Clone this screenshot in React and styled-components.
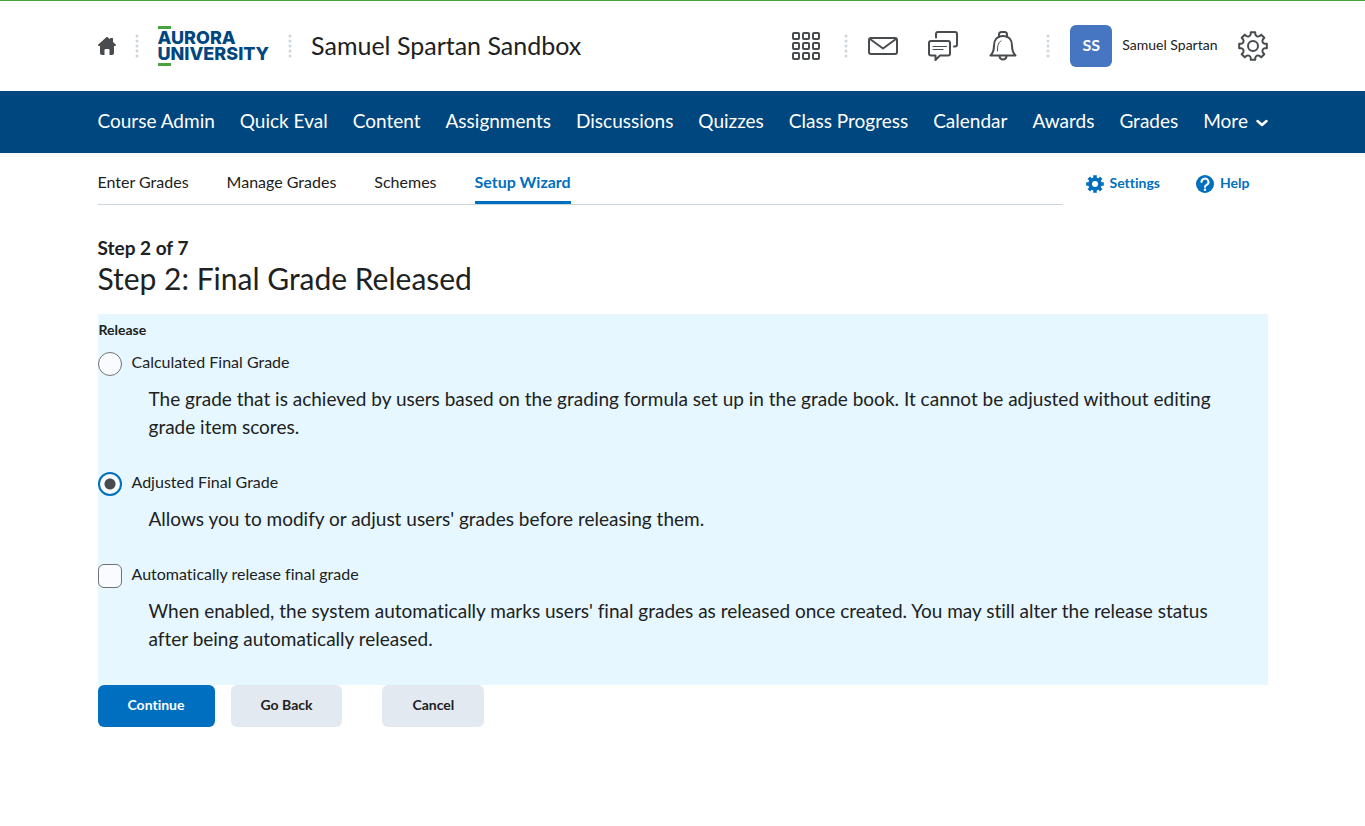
import { useState } from 'react';
import styled, { createGlobalStyle } from 'styled-components';

const navItems = [
    'Course Admin', 'Quick Eval', 'Content', 'Assignments', 'Discussions',
    'Quizzes', 'Class Progress', 'Calendar', 'Awards', 'Grades',
];

const tabs = ['Enter Grades', 'Manage Grades', 'Schemes', 'Setup Wizard'];

// solid gear with flat teeth, centred on (c, c)
function gearPath(c, outer, inner, tip, root) {
    const points = [];
    for (let i = 0; i < 8; i++) {
        const mid = i * 45;
        [[-root, inner], [-tip, outer], [tip, outer], [root, inner]].forEach(([offset, r]) => {
            const a = ((mid + offset) * Math.PI) / 180;
            points.push(`${(c + r * Math.sin(a)).toFixed(2)} ${(c - r * Math.cos(a)).toFixed(2)}`);
        });
    }
    return `M${points.join('L')}Z`;
}

// outlined gear, the valleys between the teeth are round
function roundGearPath(c, outer, inner) {
    const at = (deg, r) => {
        const a = (deg * Math.PI) / 180;
        return `${(c + r * Math.sin(a)).toFixed(2)} ${(c - r * Math.cos(a)).toFixed(2)}`;
    };
    let d = `M${at(-9, outer)}`;
    for (let i = 0; i < 8; i++) {
        const mid = i * 45;
        d += `L${at(mid + 9, outer)}L${at(mid + 11, inner + 1)}`;
        d += `A2.800 2.800 0 0 0 ${at(mid + 34, inner + 1)}L${at(mid + 36, outer)}`;
    }
    return `${d}Z`;
}

function HomeIcon() {
    return (
        <svg width="18" height="18" viewBox="0 0 18 18" fill="#494c4e" aria-hidden="true">
            <path d="M8.3.3a1 1 0 0 1 1.4 0L12 2.3V1.6a.6.6 0 0 1 .6-.6h1.8a.6.6 0 0 1 .6.6V5l2.7 2.6c.5.5.3 1.4-.5 1.4H16v7a2 2 0 0 1-2 2h-2.5v-5a1 1 0 0 0-1-1h-3a1 1 0 0 0-1 1v5H4a2 2 0 0 1-2-2V9H.8C0 9-.2 8.100.3 7.600z" />
        </svg>
    );
}

function GridIcon() {
    const cells = [1, 11, 21];
    return (
        <svg width="30" height="30" viewBox="0 0 30 30" fill="none" stroke="#494c4e" strokeWidth="2" aria-hidden="true">
            {cells.map((y) => cells.map((x) => (
                <rect key={`${x}-${y}`} x={x + 1} y={y + 1} width="6" height="6" rx="1" />
            )))}
        </svg>
    );
}

function MailIcon() {
    return (
        <svg width="30" height="30" viewBox="0 0 30 30" fill="none" stroke="#494c4e" strokeWidth="2" strokeLinejoin="round" aria-hidden="true">
            <rect x="1" y="7" width="28" height="16" rx="2" />
            <path d="M2 8l13 9.500L28 8" />
        </svg>
    );
}

function ChatIcon() {
    return (
        <svg width="30" height="30" viewBox="0 0 30 30" fill="none" stroke="#494c4e" strokeWidth="2" strokeLinecap="round" strokeLinejoin="round" aria-hidden="true">
            <path d="M8 6.500V3a2 2 0 0 1 2-2h17a2 2 0 0 1 2 2v10.500a2 2 0 0 1-2 2h-1" />
            <path d="M3 10h17a2 2 0 0 1 2 2v10.500a2 2 0 0 1-2 2h-8L7.500 29v-4.500H3a2 2 0 0 1-2-2V12a2 2 0 0 1 2-2z" />
            <path d="M5 15.500h13.500M5 18.500h10" strokeWidth="1" />
        </svg>
    );
}

function BellIcon() {
    return (
        <svg width="30" height="30" viewBox="0 0 30 30" fill="none" stroke="#494c4e" strokeWidth="2" strokeLinecap="round" strokeLinejoin="round" aria-hidden="true">
            <path d="M11 6V3.500C11 2 12 1 13.500 1h3C18 1 19 2 19 3.500V6" />
            <path d="M15 5c-6 0-9 4-9 9.500 0 5-1 7.500-3.500 10h25C25 22 24 19.500 24 14.500 24 9 21 5 15 5z" />
            <path d="M11.500 25.500c.5 2 1.800 3 3.500 3s3-1 3.500-3" />
            <path d="M13 10c-2.600 1.400-3.500 3.500-3.500 10" strokeWidth="1" />
        </svg>
    );
}

function GearIcon() {
    return (
        <svg width="30" height="30" viewBox="0 0 30 30" fill="none" stroke="#494c4e" strokeWidth="2" strokeLinejoin="round" aria-hidden="true">
            <path d={roundGearPath(15, 14, 11)} />
            <circle cx="15" cy="15" r="5" />
        </svg>
    );
}

function SettingsIcon() {
    return (
        <svg width="18" height="18" viewBox="0 0 18 18" fill="#006fbf" fillRule="evenodd" aria-hidden="true">
            <path d={`${gearPath(9, 9, 6.8, 12, 14)}M9 6a3 3 0 1 0 0 6 3 3 0 0 0 0-6z`} />
        </svg>
    );
}

function HelpIcon() {
    return (
        <svg width="18" height="18" viewBox="0 0 18 18" fill="none" aria-hidden="true">
            <circle cx="9" cy="9" r="9" fill="#006fbf" />
            <path d="M5.500 7a3.500 3.300 0 1 1 5.200 2.800C9.500 10.400 9 10.900 9 12" stroke="#fff" strokeWidth="2" strokeLinecap="round" />
            <circle cx="9" cy="14.800" r="1.200" fill="#fff" />
        </svg>
    );
}

function ChevronIcon() {
    return (
        <svg width="12" height="8" viewBox="0 0 12 8" fill="none" stroke="#fff" strokeWidth="2.500" strokeLinecap="round" strokeLinejoin="round" aria-hidden="true">
            <path d="M1.500 2L6 6l4.500-4" />
        </svg>
    );
}

function Separator() {
    return (
        <Dots width="4" height="24" viewBox="0 0 4 24" fill="#cdd5dc" aria-hidden="true">
            {[2, 7, 12, 17, 22].map((y) => <circle key={y} cx="2" cy={y} r="1.500" />)}
        </Dots>
    );
}

export default function App() {
    const [release, setRelease] = useState('adjusted');
    const [auto, setAuto] = useState(false);

    return (
        <>
            <GlobalStyle />
            <Header>
                <HeaderInner>
                    <HeaderBrand>
                        <IconButton type="button" aria-label="Home"><HomeIcon /></IconButton>
                        <Separator />
                        <Logo href="#">
                            <LogoBar />
                            <LogoText>AURORA<br />UNIVERSITY</LogoText>
                            <LogoBar />
                        </Logo>
                        <Separator />
                        <CourseName href="#">Samuel Spartan Sandbox</CourseName>
                    </HeaderBrand>
                    <HeaderTools>
                        <CourseSelector type="button" aria-label="Course selector"><GridIcon /></CourseSelector>
                        <Separator />
                        <IconGroup>
                            <IconButton type="button" aria-label="Messages"><MailIcon /></IconButton>
                            <IconButton type="button" aria-label="Subscriptions"><ChatIcon /></IconButton>
                            <IconButton type="button" aria-label="Notifications"><BellIcon /></IconButton>
                        </IconGroup>
                        <Separator />
                        <UserButton type="button">
                            <Avatar>SS</Avatar>
                            <UserName>Samuel Spartan</UserName>
                        </UserButton>
                        <IconButton type="button" aria-label="Admin tools"><GearIcon /></IconButton>
                    </HeaderTools>
                </HeaderInner>
            </Header>

            <NavBar>
                <NavInner>
                    {navItems.map((item) => <NavLink href="#" key={item}>{item}</NavLink>)}
                    <MoreButton type="button">More <ChevronIcon /></MoreButton>
                </NavInner>
            </NavBar>

            <Page>
                <SubNav>
                    <Tabs>
                        {tabs.map((tab) => (
                            <Tab href="#" key={tab} $active={tab === 'Setup Wizard'}>{tab}</Tab>
                        ))}
                    </Tabs>
                    <Actions>
                        <ActionLink href="#"><SettingsIcon /><ActionText>Settings</ActionText></ActionLink>
                        <ActionLink href="#"><HelpIcon /><ActionText>Help</ActionText></ActionLink>
                    </Actions>
                </SubNav>

                <StepCount>Step 2 of 7</StepCount>
                <Title>Step 2: Final Grade Released</Title>

                <Panel>
                    <PanelLabel>Release</PanelLabel>
                    <Option>
                        <OptionLabel>
                            <Radio
                                name="release"
                                checked={release === 'calculated'}
                                onChange={() => setRelease('calculated')}
                            />
                            Calculated Final Grade
                        </OptionLabel>
                        <Description>
                            The grade that is achieved by users based on the grading formula set up in the grade book. It cannot be adjusted without editing grade item scores.
                        </Description>
                    </Option>
                    <Option>
                        <OptionLabel>
                            <Radio
                                name="release"
                                checked={release === 'adjusted'}
                                onChange={() => setRelease('adjusted')}
                            />
                            Adjusted Final Grade
                        </OptionLabel>
                        <Description>Allows you to modify or adjust users' grades before releasing them.</Description>
                    </Option>
                    <Option>
                        <OptionLabel>
                            <Checkbox checked={auto} onChange={() => setAuto(!auto)} />
                            Automatically release final grade
                        </OptionLabel>
                        <Description>
                            When enabled, the system automatically marks users' final grades as released once created. You may still alter the release status after being automatically released.
                        </Description>
                    </Option>
                </Panel>

                <ButtonRow>
                    <ButtonGroup>
                        <Button type="button" $primary>Continue</Button>
                        <Button type="button">Go Back</Button>
                    </ButtonGroup>
                    <Button type="button">Cancel</Button>
                </ButtonRow>
            </Page>
        </>
    );
}

const GlobalStyle = createGlobalStyle`
    * {
        box-sizing: border-box;
    }

    body {
        margin: 0;
        background: #fff;
        color: #202122;
        font-family: Lato, "Open Sans", sans-serif;
        font-size: 19px;
        font-variant-ligatures: none;
        line-height: 28px;
    }

    a {
        color: inherit;
        text-decoration: none;
    }

    button {
        border: 0;
        padding: 0;
        background: none;
        color: inherit;
        font: inherit;
        font-variant-ligatures: none;
        cursor: pointer;
    }
`;

const Container = styled.div`
    max-width: 1170px;
    margin: 0 auto;
`;

const Header = styled.header`
    border-top: 1px solid #46a33e;
`;

const HeaderInner = styled(Container)`
    display: flex;
    align-items: center;
    justify-content: space-between;
    height: 90px;
`;

const HeaderBrand = styled.div`
    display: flex;
    align-items: center;
    gap: 19px;
`;

const Dots = styled.svg`
    flex: none;
`;

const IconButton = styled.button`
    display: flex;
    flex: none;
`;

const CourseSelector = styled(IconButton)`
    margin-right: 3px;
`;

const Logo = styled.a`
    display: flex;
    flex-direction: column;
    gap: 1px;
    color: #00467f;
`;

const LogoBar = styled.span`
    width: 13px;
    height: 3px;
    background: #46a33e;
`;

const LogoText = styled.span`
    font-family: Inter, Lato, sans-serif;
    font-size: 18px;
    font-weight: 800;
    line-height: 16px;
`;

const CourseName = styled.a`
    padding-bottom: 3px;
    font-size: 25px;
`;

const HeaderTools = styled.div`
    display: flex;
    align-items: center;
    gap: 20px;
`;

const IconGroup = styled.div`
    display: flex;
    gap: 30px;
    padding-right: 8px;
`;

const UserButton = styled.button`
    display: flex;
    align-items: center;
    gap: 10px;
`;

const UserName = styled.span`
    padding-bottom: 2px;
    font-size: 14px;
`;

const Avatar = styled.span`
    width: 42px;
    height: 42px;
    border-radius: 6px;
    background: #4675c1;
    color: #fff;
    font-size: 16px;
    font-weight: 700;
    line-height: 40px;
    text-align: center;
`;

const NavBar = styled.nav`
    background: #00467f;
    color: #fff;
    box-shadow: 0 4px 0 #f9f9f9;
`;

const NavInner = styled(Container)`
    display: flex;
    align-items: center;
    gap: 25px;
    height: 62px;
    padding-bottom: 2px;
`;

const NavLink = styled.a`
    white-space: nowrap;
`;

const MoreButton = styled.button`
    display: flex;
    align-items: center;
    gap: 8px;

    svg {
        margin-top: 4px;
    }
`;

const Page = styled(Container).attrs({ as: 'main' })`
    display: block;
`;

const SubNav = styled.div`
    display: flex;
    align-items: flex-start;
`;

const Tabs = styled.nav`
    display: flex;
    flex: 1;
    gap: 38px;
    height: 52px;
    border-bottom: 1px solid #cdd5dc;
`;

const Tab = styled.a`
    padding-top: 15px;
    font-size: 16px;
    ${(props) => props.$active && `
        border-bottom: 3px solid #006fbf;
        color: #006fbf;
        font-weight: 700;
    `}
`;

const Actions = styled.div`
    display: flex;
    gap: 36px;
    padding: 17px 18px 0 23px;
`;

const ActionLink = styled.a`
    display: flex;
    align-items: center;
    gap: 6px;
    color: #006fbf;
`;

const ActionText = styled.span`
    padding-bottom: 2px;
    font-size: 14px;
    font-weight: 700;
    line-height: 26px;
`;

const StepCount = styled.div`
    margin-top: 29px;
    font-weight: 700;
`;

const Title = styled.h1`
    margin: 0;
    font-size: 30px;
    font-weight: 400;
    line-height: 32px;
`;

const Panel = styled.section`
    margin-top: 20px;
    padding: 2px 0 9px;
    background: #e6f7ff;
`;

const PanelLabel = styled.div`
    padding-left: 1px;
    font-size: 14px;
    font-weight: 700;
`;

const Option = styled.div`
    padding-bottom: 23px;
`;

const OptionLabel = styled.label`
    display: flex;
    align-items: flex-start;
    gap: 10px;
    height: 41px;
    padding-top: 8px;
    font-size: 16px;
    line-height: 20px;
`;

const Radio = styled.input.attrs({ type: 'radio' })`
    appearance: none;
    width: 24px;
    height: 24px;
    margin: 0;
    border: 1px solid #6e7376;
    border-radius: 50%;
    background: #f9fbff;

    &:checked {
        border: 2px solid #006fbf;
        background: radial-gradient(circle, #494c4e 5px, #f9fbff 6px);
    }
`;

const Checkbox = styled.input.attrs({ type: 'checkbox' })`
    appearance: none;
    width: 24px;
    height: 24px;
    margin: 0;
    border: 1px solid #6e7376;
    border-radius: 6px;
    background: #f9fbff;

    &:checked {
        background: #006fbf;
    }
`;

const Description = styled.p`
    margin: 0;
    padding: 0 24px 0 51px;
`;

const ButtonRow = styled.div`
    display: flex;
    gap: 40px;
`;

const ButtonGroup = styled.div`
    display: flex;
    gap: 16px;
`;

const Button = styled.button`
    height: 42px;
    padding: 0 30px 2px;
    border-radius: 6px;
    background: ${(props) => (props.$primary ? '#006fbf' : '#e3e9f1')};
    color: ${(props) => (props.$primary ? '#fff' : '#202122')};
    font-size: 14px;
    font-weight: 700;
`;
